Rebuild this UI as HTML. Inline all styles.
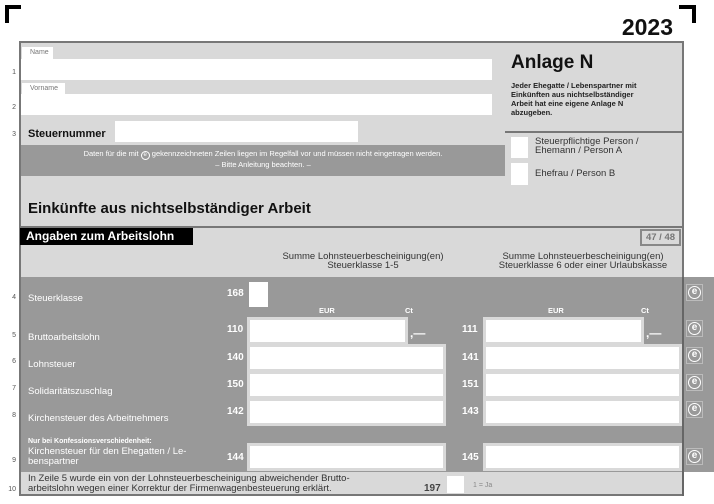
<!DOCTYPE html>
<html><head><meta charset="utf-8"><style>
*{margin:0;padding:0;box-sizing:border-box}
body{width:714px;height:504px;background:#fff;position:relative;overflow:hidden;font-family:"Liberation Sans",sans-serif}
div,span{position:absolute}
.w{background:#fff}
.ln{left:4px;width:12px;text-align:right;font-size:7px;color:#555}
.lbl{left:28px;color:#fff;font-size:9.5px}
.num{color:#fff;font-weight:bold;font-size:10px}
.inp{background:#fff;box-shadow:0 0 0 3px #d9d9d9}
.e{left:686px;width:17px;height:17px;border:1px solid #bbb}
.e b{position:absolute;left:1px;top:1px;width:13px;height:13px;border:1.5px solid #fff;border-radius:50%;color:#fff;font-size:10px;line-height:9px;text-align:center;font-weight:bold}
.hd{font-size:7.5px;font-weight:bold;color:#fff}
</style></head><body>
<div style="left:5px;top:5px;width:16px;height:4px;background:#000"></div>
<div style="left:5px;top:5px;width:4px;height:18px;background:#000"></div>
<div style="left:679px;top:5px;width:17px;height:4px;background:#000"></div>
<div style="left:692px;top:5px;width:4px;height:18px;background:#000"></div>
<div style="left:600px;top:14px;width:73px;text-align:right;font-size:23px;font-weight:bold;color:#111">2023</div>

<div style="left:19px;top:41px;width:665px;height:455px;background:#d9d9d9;border:2px solid #777"></div>
<div class="w" style="left:22px;top:47px;width:31px;height:12px;font-size:7px;color:#777;padding:2px 0 0 8px">Name</div>
<div class="w" style="left:21px;top:59px;width:471px;height:21px"></div>
<div class="w" style="left:22px;top:83px;width:43px;height:11px;font-size:7px;color:#777;padding:2px 0 0 8px">Vorname</div>
<div class="w" style="left:21px;top:94px;width:471px;height:21px"></div>
<div style="left:28px;top:128px;font-size:11px;font-weight:bold;color:#111">Steuernummer</div>
<div class="w" style="left:115px;top:121px;width:243px;height:21px"></div>
<div style="left:21px;top:145px;width:484px;height:31px;background:#999;color:#fff;font-size:7.5px;text-align:center;padding-top:4px;line-height:9px">Daten für die mit <span style="position:relative;display:inline-block;width:9px;height:9px;border:1px solid #fff;border-radius:50%;font-size:6px;line-height:7px">e</span> gekennzeichneten Zeilen liegen im Regelfall vor und müssen nicht eingetragen werden.<br>– Bitte Anleitung beachten. –</div>
<div style="left:511px;top:52px;font-size:19px;font-weight:bold;color:#111">Anlage N</div>
<div style="left:511px;top:81px;font-size:7.5px;font-weight:bold;color:#222;line-height:9px;width:170px">Jeder Ehegatte / Lebenspartner mit<br>Einkünften aus nichtselbständiger<br>Arbeit hat eine eigene Anlage N<br>abzugeben.</div>
<div style="left:505px;top:131px;width:178px;height:2px;background:#777"></div>
<div class="w" style="left:511px;top:137px;width:17px;height:21px"></div>
<div class="w" style="left:511px;top:163px;width:17px;height:22px"></div>
<div style="left:535px;top:137px;font-size:9.5px;color:#333;line-height:9px">Steuerpflichtige Person /<br>Ehemann / Person A</div>
<div style="left:535px;top:168px;font-size:9.5px;color:#333">Ehefrau / Person B</div>
<div style="left:28px;top:200px;font-size:15px;font-weight:bold;color:#111">Einkünfte aus nichtselbständiger Arbeit</div>
<div style="left:21px;top:226px;width:662px;height:2px;background:#777"></div>
<div style="left:20px;top:228px;width:173px;height:17px;background:#000;color:#fff;font-size:12px;font-weight:bold;padding:1px 0 0 6px">Angaben zum Arbeitslohn</div>
<div style="left:640px;top:229px;width:41px;height:17px;border:2px solid #888;color:#777;font-size:9.5px;font-weight:bold;text-align:center;line-height:13px">47 / 48</div>
<div style="left:232px;top:252px;width:262px;text-align:center;font-size:9.5px;color:#333;line-height:9px">Summe Lohnsteuerbescheinigung(en)<br>Steuerklasse 1-5</div>
<div style="left:470px;top:252px;width:226px;text-align:center;font-size:9.5px;color:#333;line-height:9px">Summe Lohnsteuerbescheinigung(en)<br>Steuerklasse 6 oder einer Urlaubskasse</div>

<div style="left:21px;top:277px;width:693px;height:195px;background:#999"></div>
<div style="left:682px;top:277px;width:2px;height:219px;background:#666"></div>

<div class="ln" style="top:294px">4</div><div class="ln" style="top:332px">5</div><div class="ln" style="top:358px">6</div><div class="ln" style="top:385px">7</div><div class="ln" style="top:412px">8</div><div class="ln" style="top:457px">9</div><div class="ln" style="top:486px">10</div>
<div class="ln" style="top:69px">1</div><div class="ln" style="top:104px">2</div><div class="ln" style="top:131px">3</div>

<div class="lbl" style="top:293px">Steuerklasse</div>
<div class="lbl" style="top:332px">Bruttoarbeitslohn</div>
<div class="lbl" style="top:359px">Lohnsteuer</div>
<div class="lbl" style="top:386px">Solidaritätszuschlag</div>
<div class="lbl" style="top:413px">Kirchensteuer des Arbeitnehmers</div>
<div class="lbl" style="top:436px;line-height:10px"><b style="font-size:7px">Nur bei Konfessionsverschiedenheit:</b><br>Kirchensteuer für den Ehegatten / Le-<br>benspartner</div>

<div class="num" style="left:227px;top:288px">168</div>
<div class="w" style="left:249px;top:282px;width:19px;height:25px"></div>
<div class="hd" style="left:319px;top:306px">EUR</div><div class="hd" style="left:405px;top:306px">Ct</div>
<div class="hd" style="left:548px;top:306px">EUR</div><div class="hd" style="left:641px;top:306px">Ct</div>

<div class="num" style="left:227px;top:324px">110</div>
<div class="inp" style="left:250px;top:320px;width:155px;height:22px"></div>
<div style="left:410px;top:326px;color:#fff;font-size:12px;font-weight:bold">,—</div>
<div class="num" style="left:462px;top:324px">111</div>
<div class="inp" style="left:486px;top:320px;width:155px;height:22px"></div>
<div style="left:646px;top:326px;color:#fff;font-size:12px;font-weight:bold">,—</div>

<div class="num" style="left:227px;top:352px">140</div><div class="inp" style="left:250px;top:347px;width:193px;height:22px"></div>
<div class="num" style="left:462px;top:352px">141</div><div class="inp" style="left:486px;top:347px;width:193px;height:22px"></div>
<div class="num" style="left:227px;top:379px">150</div><div class="inp" style="left:250px;top:374px;width:193px;height:22px"></div>
<div class="num" style="left:462px;top:379px">151</div><div class="inp" style="left:486px;top:374px;width:193px;height:22px"></div>
<div class="num" style="left:227px;top:406px">142</div><div class="inp" style="left:250px;top:401px;width:193px;height:22px"></div>
<div class="num" style="left:462px;top:406px">143</div><div class="inp" style="left:486px;top:401px;width:193px;height:22px"></div>
<div class="num" style="left:227px;top:452px">144</div><div class="inp" style="left:250px;top:446px;width:193px;height:22px"></div>
<div class="num" style="left:462px;top:452px">145</div><div class="inp" style="left:486px;top:446px;width:193px;height:22px"></div>

<div class="e" style="top:284px"><b>e</b></div><div class="e" style="top:320px"><b>e</b></div><div class="e" style="top:347px"><b>e</b></div><div class="e" style="top:374px"><b>e</b></div><div class="e" style="top:401px"><b>e</b></div><div class="e" style="top:448px"><b>e</b></div>

<div style="left:28px;top:474px;font-size:9.5px;color:#333;line-height:10px">In Zeile 5 wurde ein von der Lohnsteuerbescheinigung abweichender Brutto-<br>arbeitslohn wegen einer Korrektur der Firmenwagenbesteuerung erklärt.</div>
<div style="left:424px;top:483px;font-size:10px;font-weight:bold;color:#444">197</div>
<div class="w" style="left:447px;top:476px;width:17px;height:17px"></div>
<div style="left:473px;top:482px;font-size:7px;color:#888">1 = Ja</div>
</body></html>
